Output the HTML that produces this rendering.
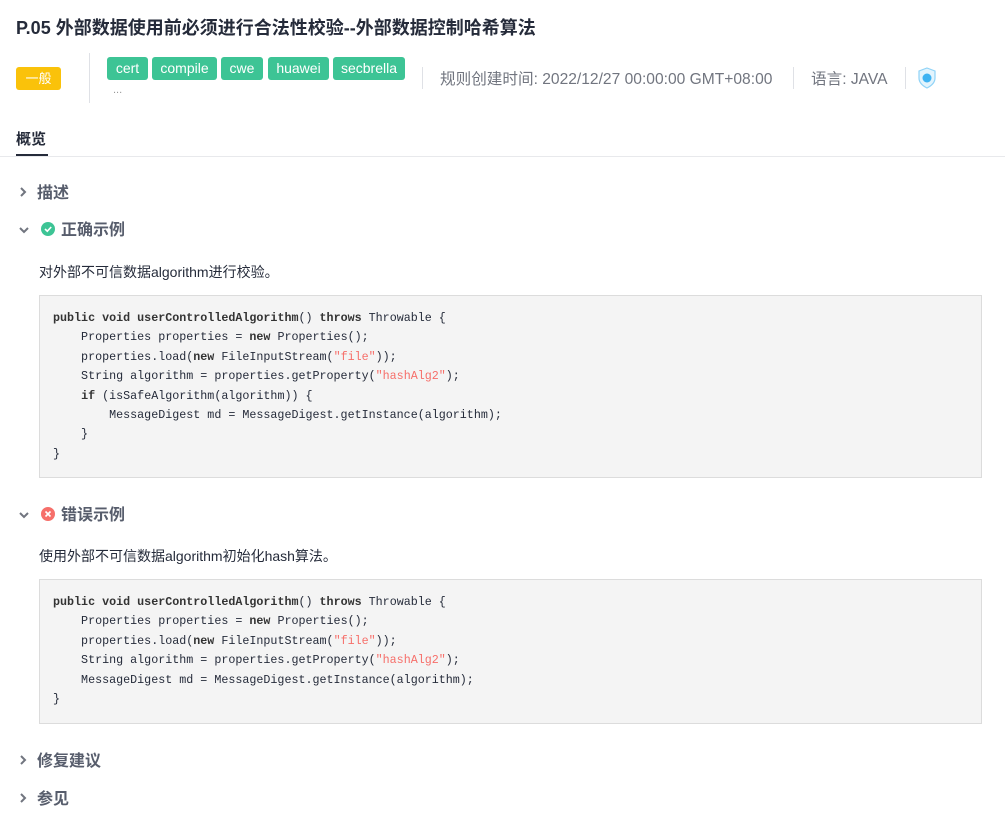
<!DOCTYPE html>
<html><head><meta charset="utf-8"><style>
*{margin:0;padding:0;box-sizing:border-box}
body{width:1005px;height:821px;background:#fff;font-family:"Liberation Sans","Noto Sans CJK SC",sans-serif;color:#252b3a;position:relative;overflow:hidden}
.abs{position:absolute;white-space:nowrap}
h1{position:absolute;left:16px;top:14px;font-size:18px;font-weight:bold;color:#252b3a}
.lvl{left:16px;top:67px;width:45px;height:23px;background:#fac20a;color:#fff;border-radius:3px;font-size:13px;text-align:center;line-height:23px}
.vl{position:absolute;width:1px;background:#dfe1e6}
.tag{position:absolute;top:57px;height:23px;background:#3dc495;color:#fff;border-radius:3px;font-size:14px;line-height:22px;text-align:center}
.meta{font-size:15.6px;color:#71757f;top:67px}
.tab{left:16px;top:128px;font-size:15px;font-weight:bold}
.sec{font-size:16px;font-weight:bold;color:#575d6c}
.txt{font-size:14px;color:#252b3a}
pre{position:absolute;left:39px;width:943px;background:#f4f4f4;border:1px solid #dcdcdc;font-family:"Liberation Mono",monospace;font-size:11.7px;line-height:19.4px;color:#252b3a;padding:13px 13px}
pre b{color:#333}
.r{color:#f66f6a}
</style></head><body>
<h1>P.05 外部数据使用前必须进行合法性校验--外部数据控制哈希算法</h1>
<div class="abs lvl">一般</div>
<div class="vl" style="left:89px;top:53px;height:50px"></div>
<div class="tag" style="left:107px;width:41px">cert</div>
<div class="tag" style="left:152px;width:65px">compile</div>
<div class="tag" style="left:221px;width:42px">cwe</div>
<div class="tag" style="left:268px;width:61px">huawei</div>
<div class="tag" style="left:333px;width:72px">secbrella</div>
<div class="abs" style="left:113px;top:84px;font-size:11px;color:#999">...</div>
<div class="vl" style="left:422px;top:67px;height:22px"></div>
<div class="abs meta" style="left:440px">规则创建时间: 2022/12/27 00:00:00 GMT+08:00</div>
<div class="vl" style="left:793px;top:67px;height:22px"></div>
<div class="abs meta" style="left:811px">语言: JAVA</div>
<div class="vl" style="left:905px;top:67px;height:22px"></div>
<svg class="abs" style="left:917px;top:67px" width="20" height="22" viewBox="0 0 20 22"><path d="M10 1 L18 4 V11 C18 16 14 19 10 21 C6 19 2 16 2 11 V4 Z" fill="#e3f4fd" stroke="#8fd3f7" stroke-width="1.2"/><circle cx="10" cy="11" r="4.5" fill="#3fb3f2"/></svg>
<div class="abs tab">概览</div>
<div class="abs" style="left:16px;top:154px;width:32px;height:3px;background:#252b3a"></div>
<div class="abs" style="left:0;top:156px;width:1005px;height:1px;background:#e8e9ec"></div>

<svg class="abs" style="left:18px;top:186px" width="10" height="12"><path d="M3 2 L7 6 L3 10" fill="none" stroke="#71757f" stroke-width="2"/></svg>
<div class="abs sec" style="left:37px;top:179px">描述</div>

<svg class="abs" style="left:18px;top:225px" width="12" height="10"><path d="M2 3 L6 7 L10 3" fill="none" stroke="#71757f" stroke-width="2"/></svg>
<svg class="abs" style="left:41px;top:222px" width="14" height="14"><circle cx="7" cy="7" r="7" fill="#3dc495"/><path d="M4 7 L6.3 9.2 L10.2 5" fill="none" stroke="#fff" stroke-width="1.6"/></svg>
<div class="abs sec" style="left:61px;top:216px">正确示例</div>
<div class="abs txt" style="left:39px;top:262px">对外部不可信数据algorithm进行校验。</div>
<pre style="top:295px;height:183px"><b>public void</b> <span class="r"><b>userControlledAlgorithm</b></span>() <b>throws</b> Throwable {
    Properties properties = <b>new</b> Properties();
    properties.load(<b>new</b> FileInputStream(<span class="r">"file"</span>));
    String algorithm = properties.getProperty(<span class="r">"hashAlg2"</span>);
    <b>if</b> (isSafeAlgorithm(algorithm)) {
        MessageDigest md = MessageDigest.getInstance(algorithm);
    }
}</pre>

<svg class="abs" style="left:18px;top:510px" width="12" height="10"><path d="M2 3 L6 7 L10 3" fill="none" stroke="#71757f" stroke-width="2"/></svg>
<svg class="abs" style="left:41px;top:507px" width="14" height="14"><circle cx="7" cy="7" r="7" fill="#f66f6a"/><path d="M4.5 4.5 L9.5 9.5 M9.5 4.5 L4.5 9.5" stroke="#fff" stroke-width="1.6"/></svg>
<div class="abs sec" style="left:61px;top:501px">错误示例</div>
<div class="abs txt" style="left:39px;top:546px">使用外部不可信数据algorithm初始化hash算法。</div>
<pre style="top:579px;height:145px"><b>public void</b> <span class="r"><b>userControlledAlgorithm</b></span>() <b>throws</b> Throwable {
    Properties properties = <b>new</b> Properties();
    properties.load(<b>new</b> FileInputStream(<span class="r">"file"</span>));
    String algorithm = properties.getProperty(<span class="r">"hashAlg2"</span>);
    MessageDigest md = MessageDigest.getInstance(algorithm);
}</pre>

<svg class="abs" style="left:18px;top:754px" width="10" height="12"><path d="M3 2 L7 6 L3 10" fill="none" stroke="#71757f" stroke-width="2"/></svg>
<div class="abs sec" style="left:37px;top:747px">修复建议</div>
<svg class="abs" style="left:18px;top:792px" width="10" height="12"><path d="M3 2 L7 6 L3 10" fill="none" stroke="#71757f" stroke-width="2"/></svg>
<div class="abs sec" style="left:37px;top:785px">参见</div>
</body></html>
